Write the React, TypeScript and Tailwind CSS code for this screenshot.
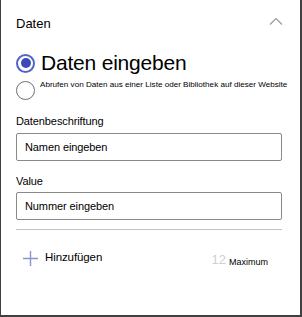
export default function App() {
  return (
    <div
      className="w-[302px] h-[317px] bg-white border-l border-r-2 border-b-2 border-[#404040] text-black overflow-hidden"
      style={{ fontFamily: '"Liberation Sans", Arial, sans-serif' }}
    >
      <div className="pl-[15px] pr-[18px]">
        {/* Header */}
        <div className="flex items-center justify-between pt-[16px]">
          <span className="text-[13px] leading-4">Daten</span>
          <svg width="14" height="8" viewBox="0 0 14 8" className="mr-[-1px] mt-[-6px]">
            <path d="M1 7.5 L7 1.5 L13 7.5" fill="none" stroke="#9a9a9a" strokeWidth="1.2" />
          </svg>
        </div>

        {/* Radio options */}
        <div className="mt-[20px] flex items-center gap-[6px]">
          <span className="w-[19px] h-[19px] rounded-full border-2 border-[#5563c8] flex items-center justify-center shrink-0">
            <span className="w-[10px] h-[10px] rounded-full bg-[#3a48b8]" />
          </span>
          <span className="text-[21px] leading-[22px] tracking-[-0.2px]">Daten eingeben</span>
        </div>
        <div className="mt-[6px] flex items-start gap-[5px]">
          <span className="w-[19px] h-[19px] rounded-full border-[1.5px] border-[#6e6e6e] shrink-0 mt-[1px]" />
          <span className="text-[8.1px] leading-[9px] whitespace-nowrap">
            Abrufen von Daten aus einer Liste oder Bibliothek auf dieser Website
          </span>
        </div>

        {/* Fields */}
        <div className="mt-[14px] text-[11px] leading-[14px] tracking-[-0.1px]">Datenbeschriftung</div>
        <div className="mt-[5px] h-[28px] border border-[#8a8a8a] rounded-[2px] flex items-center pl-[8px] text-[11px] tracking-[-0.1px]">
          Namen eingeben
        </div>
        <div className="mt-[13px] text-[11px] leading-[14px] tracking-[-0.1px]">Value</div>
        <div className="mt-[4px] h-[28px] border border-[#8a8a8a] rounded-[2px] flex items-center pl-[8px] text-[11px] tracking-[-0.1px]">
          Nummer eingeben
        </div>

        <div className="mt-[9px] h-px bg-[#c4c4c4]" />

        {/* Add row */}
        <div className="mt-[18px] flex items-center">
          <svg width="15" height="15" viewBox="0 0 15 15" className="ml-[7px]">
            <path d="M7.5 0 V15 M0 7.5 H15" stroke="#8c93cc" strokeWidth="1.4" />
          </svg>
          <span className="ml-[7px] text-[11.5px] leading-4 tracking-[-0.1px] mt-[-3px]">Hinzufügen</span>
          <div className="ml-auto flex items-end mr-[14px] mt-[4px]">
            <span className="text-[13px] leading-4 text-[#cfcfcf]">12</span>
            <span className="ml-[3px] text-[9px] leading-3 text-black">Maximum</span>
          </div>
        </div>
      </div>
    </div>
  );
}
